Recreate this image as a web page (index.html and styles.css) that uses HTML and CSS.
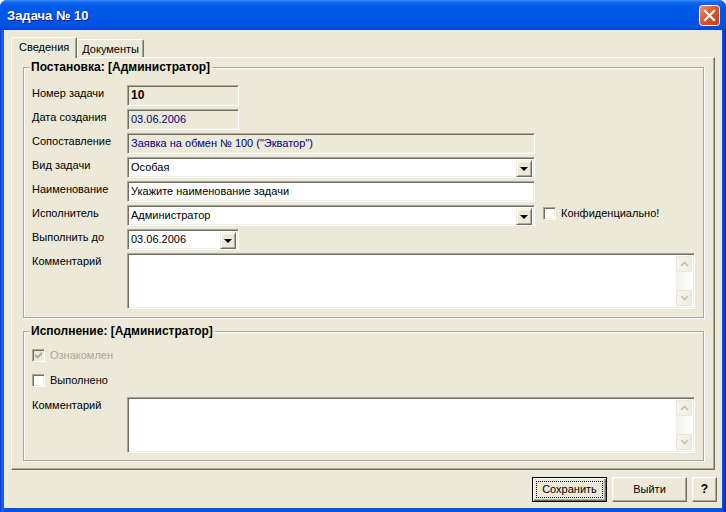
FILE: index.html
```html
<!DOCTYPE html>
<html lang="ru">
<head>
    <meta charset="UTF-8">
    <title>Задача № 10</title>
    <link rel="stylesheet" href="styles.css">
</head>
<body>
<div class="window">
    <div class="titlebar">
        <span class="title">Задача № 10</span>
        <span class="close">
            <svg width="21" height="21" viewBox="0 0 21 21">
                <defs>
                    <linearGradient id="cg" x1="0" y1="0" x2="1" y2="1">
                        <stop offset="0" stop-color="#F0906E"/>
                        <stop offset="0.45" stop-color="#E2582F"/>
                        <stop offset="1" stop-color="#C4361A"/>
                    </linearGradient>
                </defs>
                <rect x="0.5" y="0.5" width="20" height="20" rx="3" fill="url(#cg)" stroke="#fff"/>
                <path d="M6 6 L15 15 M15 6 L6 15" stroke="#fff" stroke-width="2.2" stroke-linecap="square"/>
            </svg>
        </span>
    </div>

    <div class="client">
        <div class="tabs">
            <div class="tab active">Сведения</div>
            <div class="tab">Документы</div>
        </div>

        <div class="panel">
            <div class="group g1">
                <span class="legend">Постановка: [Администратор]</span>
                <div class="gbody">
                    <div class="row">
                        <span class="lbl">Номер задачи</span>
                        <div class="edit ro short num">10</div>
                    </div>
                    <div class="row">
                        <span class="lbl">Дата создания</span>
                        <div class="edit ro short blue">03.06.2006</div>
                    </div>
                    <div class="row">
                        <span class="lbl">Сопоставление</span>
                        <div class="edit ro wide blue">Заявка на обмен № 100 ("Экватор")</div>
                    </div>
                    <div class="row">
                        <span class="lbl">Вид задачи</span>
                        <div class="edit wide combo">
                            <span class="val">Особая</span>
                            <span class="drop"><i></i></span>
                        </div>
                    </div>
                    <div class="row">
                        <span class="lbl">Наименование</span>
                        <div class="edit wide">Укажите наименование задачи</div>
                    </div>
                    <div class="row">
                        <span class="lbl">Исполнитель</span>
                        <div class="edit wide combo">
                            <span class="val">Администратор</span>
                            <span class="drop"><i></i></span>
                        </div>
                        <label class="check side"><span class="box"></span>Конфиденциально!</label>
                    </div>
                    <div class="row">
                        <span class="lbl">Выполнить до</span>
                        <div class="edit short combo">
                            <span class="val">03.06.2006</span>
                            <span class="drop"><i></i></span>
                        </div>
                    </div>
                    <div class="row">
                        <span class="lbl">Комментарий</span>
                        <div class="memo">
                            <div class="memo-text"></div>
                            <div class="vscroll">
                                <span class="sbtn"><svg width="9" height="6" viewBox="0 0 9 6"><path d="M1 5 L4.5 1.5 L8 5" fill="none" stroke="#C4C2B4" stroke-width="1.6"/></svg></span>
                                <span class="strack"></span>
                                <span class="sbtn"><svg width="9" height="6" viewBox="0 0 9 6"><path d="M1 1 L4.5 4.5 L8 1" fill="none" stroke="#C4C2B4" stroke-width="1.6"/></svg></span>
                            </div>
                        </div>
                    </div>
                </div>
            </div>

            <div class="group g2">
                <span class="legend">Исполнение: [Администратор]</span>
                <div class="gbody">
                    <label class="check disabled first">
                        <span class="box">
                            <svg width="9" height="9" viewBox="0 0 9 9"><path d="M1 4 L3.5 6.5 L8 2" fill="none" stroke="#ACA899" stroke-width="1.8"/></svg>
                        </span>Ознакомлен
                    </label>
                    <label class="check second"><span class="box"></span>Выполнено</label>
                    <div class="row memo-row">
                        <span class="lbl">Комментарий</span>
                        <div class="memo">
                            <div class="memo-text"></div>
                            <div class="vscroll">
                                <span class="sbtn"><svg width="9" height="6" viewBox="0 0 9 6"><path d="M1 5 L4.5 1.5 L8 5" fill="none" stroke="#C4C2B4" stroke-width="1.6"/></svg></span>
                                <span class="strack"></span>
                                <span class="sbtn"><svg width="9" height="6" viewBox="0 0 9 6"><path d="M1 1 L4.5 4.5 L8 1" fill="none" stroke="#C4C2B4" stroke-width="1.6"/></svg></span>
                            </div>
                        </div>
                    </div>
                </div>
            </div>
        </div>

        <div class="buttons">
            <button class="btn default"><span>Сохранить</span></button>
            <button class="btn">Выйти</button>
            <button class="btn help">?</button>
        </div>
    </div>
</div>
</body>
</html>
```

FILE: styles.css
```css
* {
    margin: 0;
    padding: 0;
    box-sizing: border-box;
}

body {
    width: 726px;
    height: 512px;
    overflow: hidden;
    background: #fff;
    font-family: 'Liberation Sans', Arial, sans-serif;
    font-size: 11px;
    line-height: 13px;
    color: #000;
}

/* window frame */
.window {
    width: 726px;
    height: 512px;
    display: flex;
    flex-direction: column;
    background: linear-gradient(to right, #0831D9 0, #166AEE 2px, #0055E5 4px, #0055E5 722px, #0A3DCB 724px, #0022A8 726px);
    border-radius: 7px 7px 0 0;
}

.titlebar {
    height: 30px;
    display: flex;
    align-items: center;
    padding: 0 6px 0 7px;
    border-radius: 7px 7px 0 0;
    background: linear-gradient(#3D8DF7 0, #1A6DF0 2px, #0860EC 4px, #0058E7 8px, #0055E5 18px, #0052E1 26px, #0046D4 30px);
}

.title {
    flex: 1;
    color: #fff;
    font-weight: bold;
    font-size: 13px;
    text-shadow: 1px 1px 0 #0A1C8A;
    margin-top: 1px;
}

.close {
    width: 21px;
    height: 21px;
    margin-top: 1px;
}

.client {
    flex: 1;
    margin: 0 4px 4px;
    background: #ECE9D8;
    padding: 7px 7px 0 7px;
    display: flex;
    flex-direction: column;
}

/* tabs */
.tabs {
    display: flex;
    align-items: flex-end;
    height: 20px;
}

.tab {
    height: 18px;
    padding: 3px 4px 0 4px;
    border-top: 1px solid #fff;
    border-left: 1px solid #fff;
    border-right: 1px solid #716F64;
    box-shadow: inset -1px 0 0 #ACA899;
    border-radius: 2px 2px 0 0;
    background: #ECE9D8;
}

.tab.active {
    height: 21px;
    margin-bottom: -1px;
    padding: 3px 7px 0 7px;
    position: relative;
    z-index: 1;
}

/* tab page */
.panel {
    width: 704px;
    height: 413px;
    border: 1px solid;
    border-color: #fff #716F64 #716F64 #fff;
    box-shadow: inset -1px -1px 0 #ACA899;
    padding: 9px 0 0 11px;
}

.group {
    width: 681px;
    border: 1px solid #ACA899;
    box-shadow: 1px 1px 0 #fff, inset 1px 1px 0 #fff;
}

.g1 {
    height: 251px;
}

.g2 {
    height: 130px;
    margin-top: 13px;
}

.legend {
    display: table;
    margin: -7px 0 0 6px;
    padding: 0 2px 0 1px;
    background: #ECE9D8;
    font-weight: bold;
    font-size: 12px;
    line-height: 13px;
}

.gbody {
    padding: 11px 0 0 8px;
    display: flex;
    flex-direction: column;
    gap: 3px;
}

.row {
    display: flex;
    align-items: flex-start;
}

.lbl {
    width: 95px;
    padding-top: 2px;
}

/* sunken edit */
.edit {
    height: 21px;
    border: 1px solid;
    border-color: #ACA899 #fff #fff #ACA899;
    box-shadow: inset 1px 1px 0 #716F64, inset -1px -1px 0 #F1EFE2;
    background: #fff;
    padding: 3px 3px 0 3px;
    white-space: nowrap;
}

.edit.ro {
    background: #ECE9D8;
}

.short {
    width: 112px;
}

.wide {
    width: 408px;
}

.num {
    font-weight: bold;
    font-size: 12px;
}

.blue {
    color: #000080;
}

.combo {
    display: flex;
    padding-right: 2px;
}

.combo .val {
    flex: 1;
}

.drop {
    width: 16px;
    height: 17px;
    margin-top: -1px;
    border: 1px solid;
    border-color: #F1EFE2 #716F64 #716F64 #F1EFE2;
    box-shadow: inset 1px 1px 0 #fff, inset -1px -1px 0 #ACA899;
    background: #ECE9D8;
    display: flex;
    align-items: center;
    justify-content: center;
}

.drop i {
    width: 0;
    height: 0;
    border-left: 4px solid transparent;
    border-right: 4px solid transparent;
    border-top: 4px solid #000;
    margin-top: 1px;
}

/* memo with disabled scrollbar */
.memo {
    width: 568px;
    height: 56px;
    display: flex;
    border: 1px solid;
    border-color: #ACA899 #fff #fff #ACA899;
    box-shadow: inset 1px 1px 0 #716F64, inset -1px -1px 0 #F1EFE2;
    background: #fff;
    padding: 2px;
}

.memo-text {
    flex: 1;
}

.vscroll {
    width: 16px;
    display: flex;
    flex-direction: column;
    background: linear-gradient(to right, #F3F1EC, #FEFEFB);
}

.sbtn {
    height: 16px;
    border: 1px solid #E8E6DC;
    border-radius: 2px;
    background: linear-gradient(to right, #F5F4EE, #EEEDE5);
    display: flex;
    align-items: center;
    justify-content: center;
}

.strack {
    flex: 1;
}

/* checkboxes */
.check {
    display: flex;
    align-items: center;
    gap: 5px;
    height: 13px;
}

.box {
    width: 13px;
    height: 13px;
    border: 1px solid;
    border-color: #ACA899 #fff #fff #ACA899;
    box-shadow: inset 1px 1px 0 #716F64, inset -1px -1px 0 #F1EFE2;
    background: #fff;
    display: flex;
    align-items: center;
    justify-content: center;
}

.check.side {
    margin: 2px 0 0 8px;
}

.check.disabled {
    color: #ACA899;
}

.check.disabled .box {
    background: #ECE9D8;
}

.check.second {
    margin-top: 9px;
}

.memo-row {
    margin-top: 7px;
}

/* bottom buttons */
.buttons {
    display: flex;
    justify-content: flex-end;
    gap: 5px;
    margin: 7px -2px 0 0;
}

.btn {
    width: 75px;
    height: 25px;
    font: inherit;
    color: #000;
    background: #ECE9D8;
    border: 1px solid;
    border-color: #fff #716F64 #716F64 #fff;
    box-shadow: inset -1px -1px 0 #ACA899, inset 1px 1px 0 #F1EFE2;
}

.btn.default {
    border: 1px solid #000;
    box-shadow: inset 1px 1px 0 #fff, inset -1px -1px 0 #716F64, inset -2px -2px 0 #ACA899;
    padding: 3px;
}

.btn.default span {
    display: block;
    height: 17px;
    line-height: 15px;
    border: 1px dotted #000;
}

.btn.help {
    width: 25px;
    font-weight: bold;
    font-size: 12px;
}
```
